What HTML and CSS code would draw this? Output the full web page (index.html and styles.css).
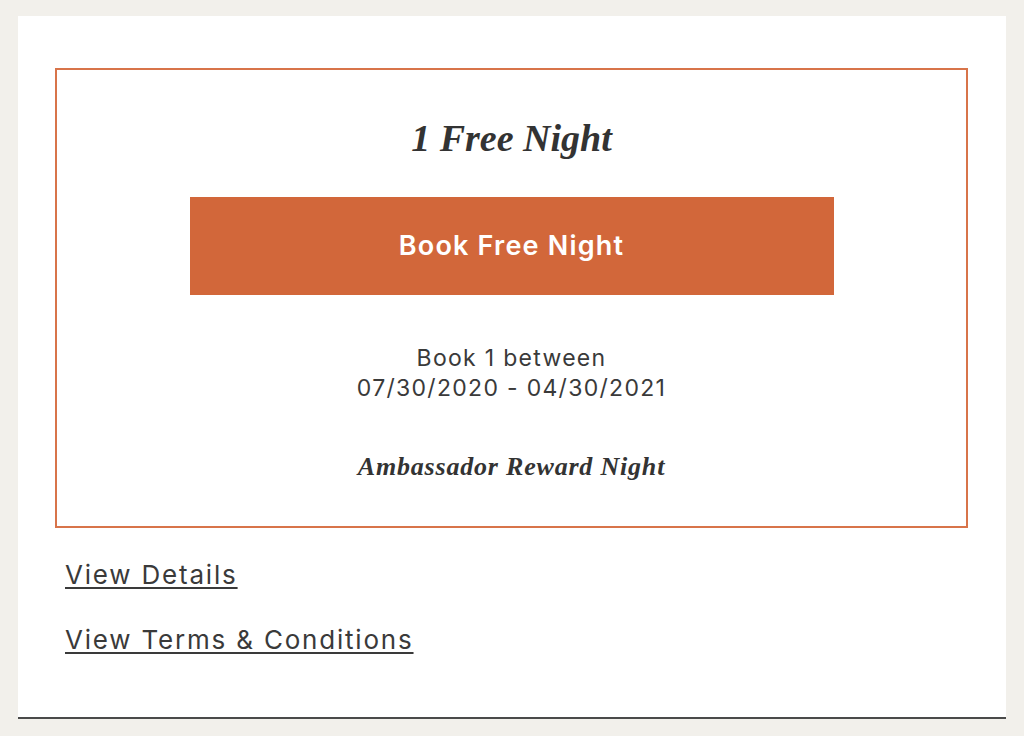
FILE: index.html
```html
<!DOCTYPE html>
<html>
<head>
    <title>Free Night Certificate</title>
    <link rel="stylesheet" href="styles.css">
</head>
<body>
    <div class="card">
        <div class="reward">
            <h2 class="reward-title">1 Free Night</h2>
            <a class="book-button" href="#">Book Free Night</a>
            <p class="reward-dates">Book 1 between<br>07/30/2020 - 04/30/2021</p>
            <p class="reward-type">Ambassador Reward Night</p>
        </div>
        <div class="links">
            <a href="#">View Details</a>
            <a href="#">View Terms &amp; Conditions</a>
        </div>
    </div>
</body>
</html>
```

FILE: styles.css
```css
body {
    margin: 0;
    background-color: #f2f0eb;
    font-family: "Inter", "Liberation Sans", sans-serif;
    color: #3a3a3a;
}

.card {
    margin: 16px 18px 0;
    background-color: #fff;
    padding: 52px 38px 60px 37px;
    border-bottom: 2px solid #4a4a4a;
}

.reward {
    border: 2px solid #d8744a;
    padding: 48px 0 44px;
    text-align: center;
}

.reward-title {
    margin: 0;
    font-family: "Liberation Serif", serif;
    font-style: italic;
    font-weight: bold;
    font-size: 38px;
    line-height: 40px;
    color: #333;
}

.book-button {
    display: block;
    width: 644px;
    height: 98px;
    line-height: 98px;
    margin: 39px auto 0;
    background-color: #d2673a;
    color: #fff;
    text-decoration: none;
    font-size: 27px;
    font-weight: 600;
    letter-spacing: 1.2px;
}

.reward-dates {
    margin: 48px 0 0;
    font-size: 23px;
    line-height: 30px;
    letter-spacing: 1.3px;
}

.reward-type {
    margin: 49px 0 0;
    font-family: "Liberation Serif", serif;
    font-style: italic;
    font-weight: bold;
    font-size: 26px;
    line-height: 30px;
    letter-spacing: 0.8px;
    color: #333;
}

.links {
    padding: 30px 0 0 10px;
}

.links a {
    display: table;
    font-size: 26px;
    line-height: 34px;
    letter-spacing: 1.8px;
    color: #3a3a3a;
    text-decoration: underline;
    text-underline-offset: 3px;
}

.links a + a {
    margin-top: 31px;
}
```
